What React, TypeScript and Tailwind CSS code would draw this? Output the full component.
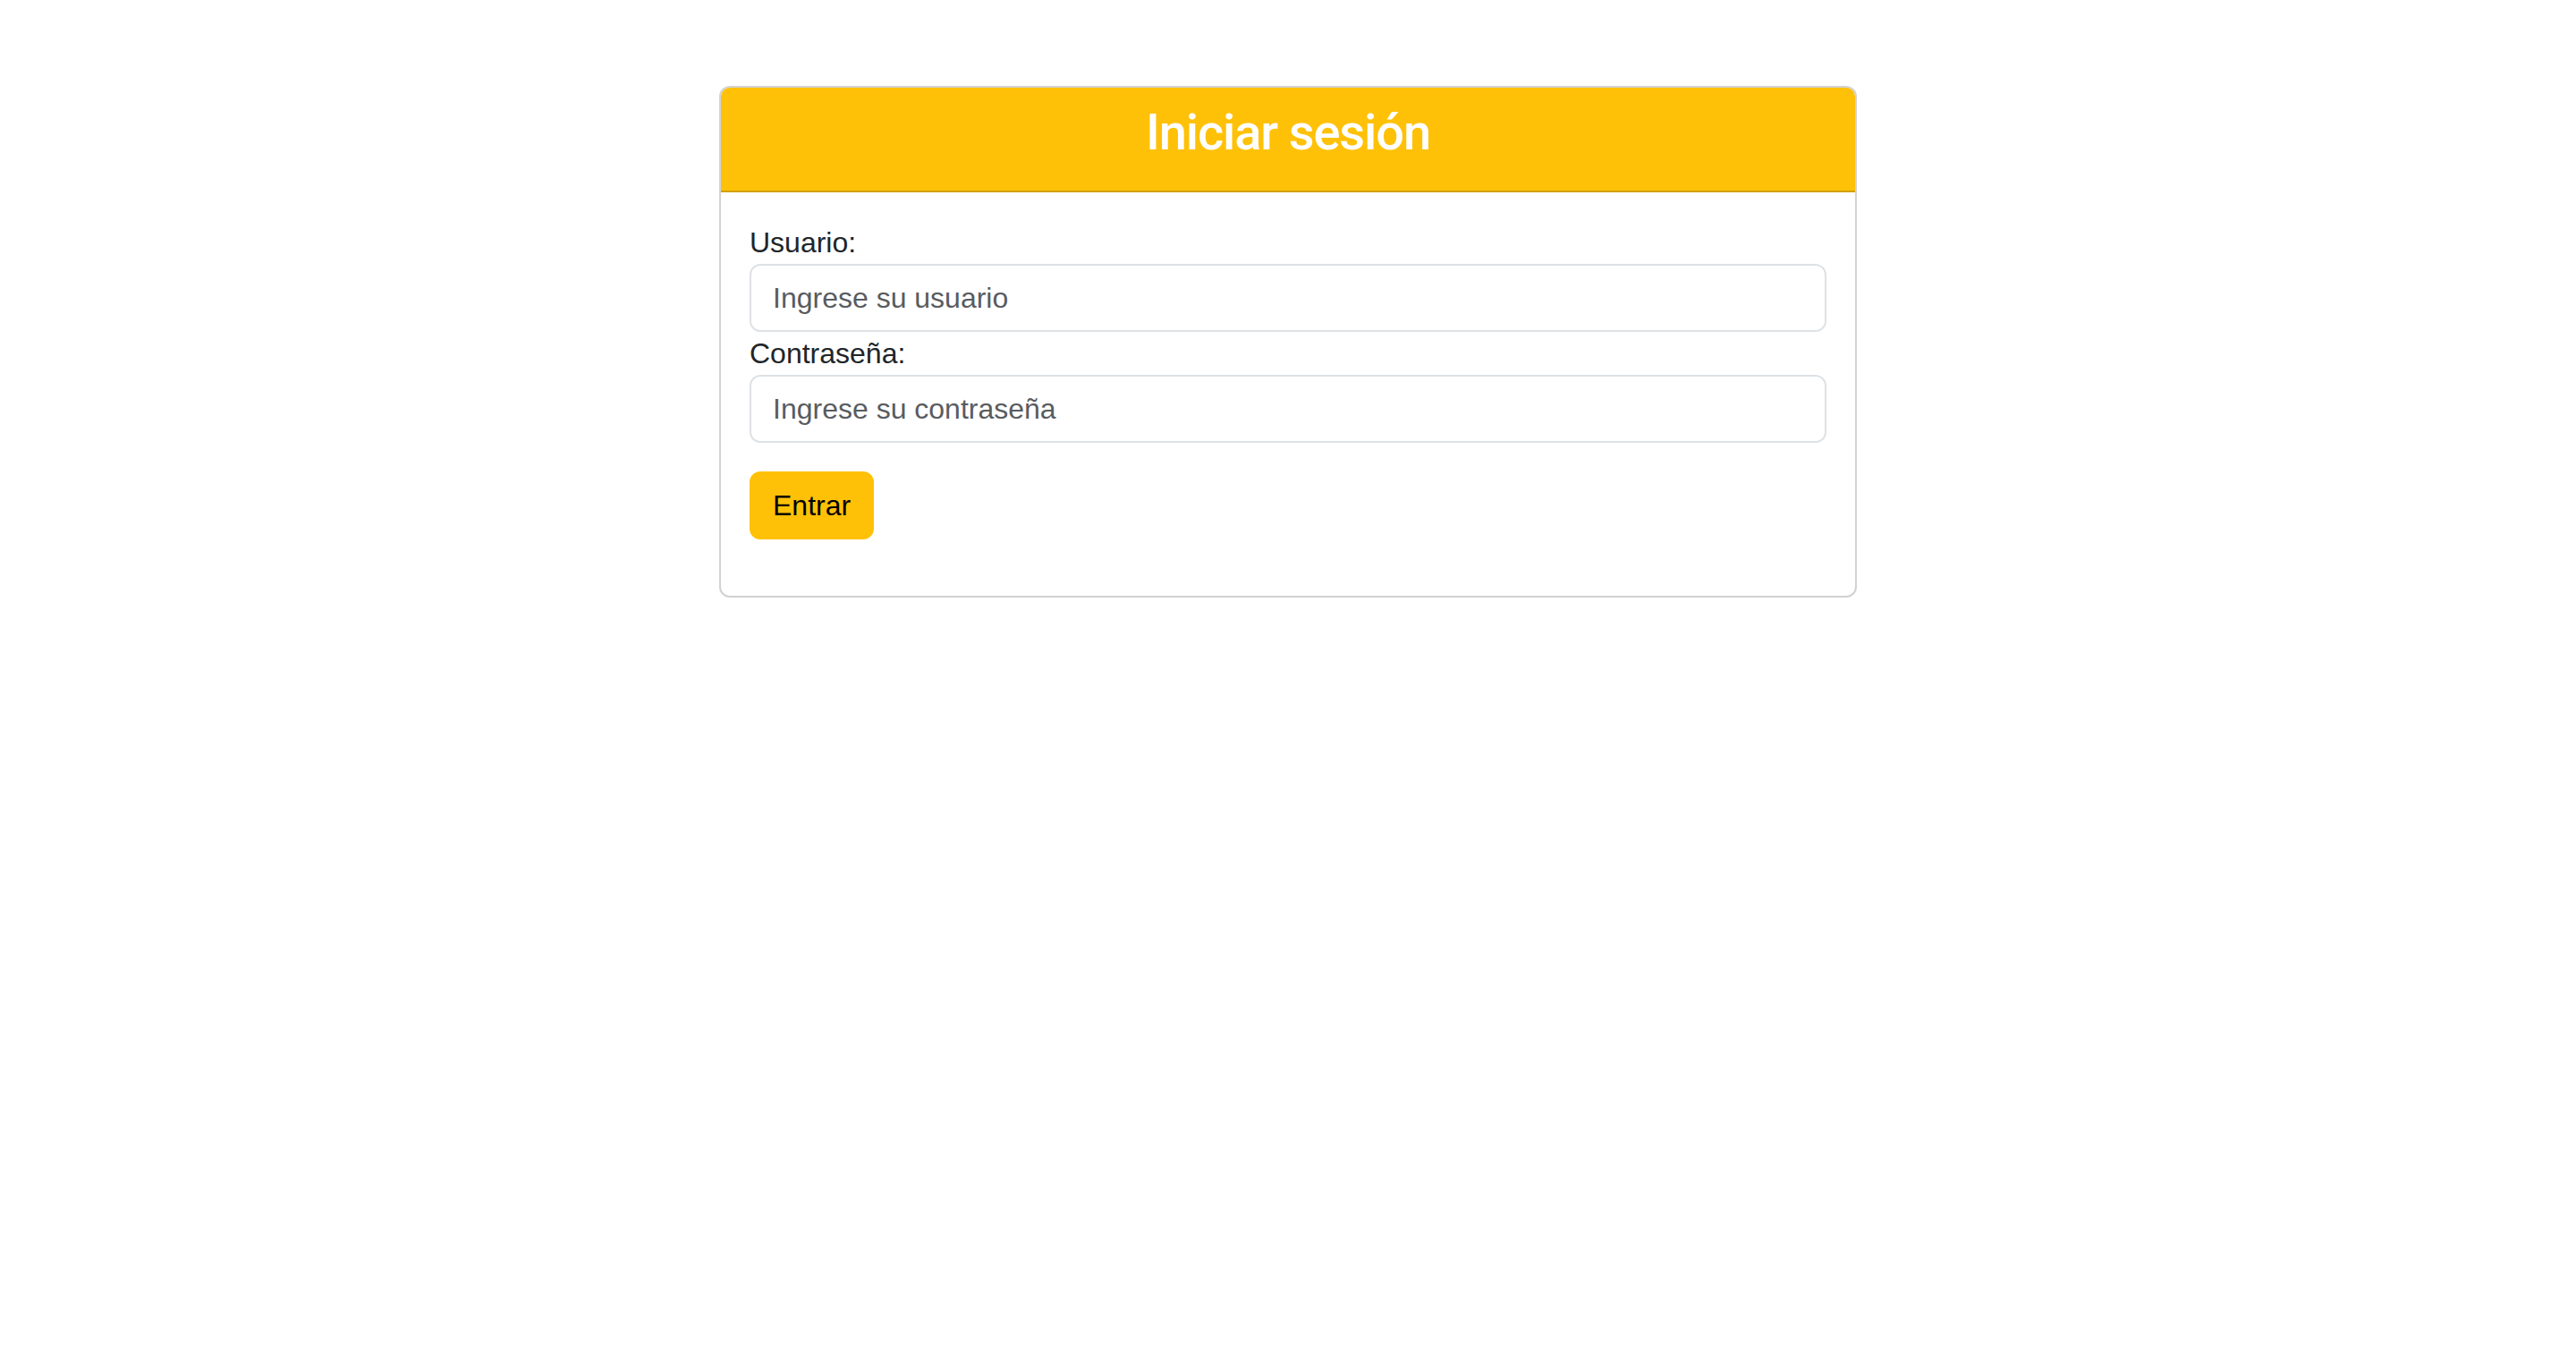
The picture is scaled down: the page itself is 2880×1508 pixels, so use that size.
export default function App() {
  return (
    <div className="min-h-screen w-full bg-white font-['Liberation_Sans',Arial,sans-serif] text-[#212529]">
      <div className="mx-auto w-[1272px] pt-[96px]">
        {/* Login card */}
        <div className="overflow-hidden rounded-[12px] border-2 border-[rgba(0,0,0,0.175)] bg-white">
          <div className="border-b-2 border-[rgba(0,0,0,0.175)] bg-[#ffc107] px-8 pt-[17px] pb-[15px]">
            <h3 className="mb-4 text-center font-['Roboto',Arial,sans-serif] text-[56px] leading-[1.2] font-medium tracking-[-0.02em] text-white">
              Iniciar sesión
            </h3>
          </div>

          <form className="px-8 pt-8 pb-[63px]" onSubmit={(e) => e.preventDefault()}>
            <label htmlFor="usuario" className="block text-[32px] leading-[48px]">
              Usuario:
            </label>
            <input
              id="usuario"
              type="text"
              placeholder="Ingrese su usuario"
              className="block h-[76px] w-full rounded-[12px] border-2 border-[#dee2e6] bg-white px-6 py-3 text-[32px] leading-[48px] text-[#212529] outline-none placeholder:text-[#595c5f]"
            />

            <label htmlFor="clave" className="block text-[32px] leading-[48px]">
              Contraseña:
            </label>
            <input
              id="clave"
              type="password"
              placeholder="Ingrese su contraseña"
              className="block h-[76px] w-full rounded-[12px] border-2 border-[#dee2e6] bg-white px-6 py-3 text-[32px] leading-[48px] text-[#212529] outline-none placeholder:text-[#595c5f]"
            />

            <button
              type="submit"
              className="mt-8 block h-[76px] rounded-[12px] border-2 border-[#ffc107] bg-[#ffc107] px-6 text-[32px] leading-[48px] text-black"
            >
              Entrar
            </button>
          </form>
        </div>
      </div>
    </div>
  );
}
